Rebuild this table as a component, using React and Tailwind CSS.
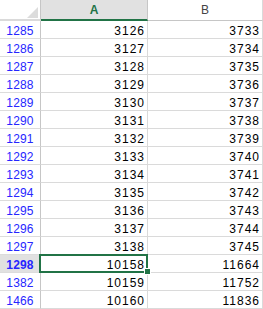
import React from "react";

const rows = [
  [1285, 3126, 3733],
  [1286, 3127, 3734],
  [1287, 3128, 3735],
  [1288, 3129, 3736],
  [1289, 3130, 3737],
  [1290, 3131, 3738],
  [1291, 3132, 3739],
  [1292, 3133, 3740],
  [1293, 3134, 3741],
  [1294, 3135, 3742],
  [1295, 3136, 3743],
  [1296, 3137, 3744],
  [1297, 3138, 3745],
  [1298, 10158, 11664],
  [1382, 10159, 11752],
  [1466, 10160, 11836],
];

export default function App() {
  return (
    <div
      className="relative w-[263px] h-[309px] overflow-hidden bg-white"
      style={{ fontFamily: '"Liberation Sans", Arial, sans-serif' }}
    >
      {/* header */}
      <div className="flex h-[21px]">
        <div className="relative w-[41px] h-[21px] border-r border-r-[#c6c6c6] border-b-2 border-b-[#dadada] bg-white">
          <svg className="absolute left-[27px] top-[7px]" width="11" height="11" viewBox="0 0 11 11">
            <polygon points="11,0 11,11 0,11" fill="#dcdcdc" />
          </svg>
        </div>
        <div className="w-[107px] h-[21px] border-r border-r-[#c6c6c6] border-b-2 border-b-[#217346] bg-[#e1e1e1] text-center text-[12px] leading-[21px] font-bold text-[#217346]">
          A
        </div>
        <div className="w-[115px] h-[21px] border-r border-r-[#dadada] border-b border-b-[#c6c6c6] bg-white text-center text-[12px] leading-[21px] text-[#444444]">
          B
        </div>
      </div>
      {rows.map(([n, a, b]) => {
        const sel = n === 1298;
        return (
          <div key={n} className="flex h-[18px]">
            <div
              className={
                "w-[41px] h-[18px] border-r border-r-[#c6c6c6] border-b border-b-[#dcdcdc] text-center text-[12px] leading-[21px] tracking-[0.15px] text-[#2626ff] " +
                (sel ? "bg-[#e1e1e1] font-bold" : "bg-white")
              }
            >
              {n}
            </div>
            <div className="w-[107px] h-[18px] border-r border-r-[#dadada] border-b border-b-[#dadada] text-right pr-[2px] text-[12px] leading-[21px] tracking-[1px] text-black">
              {a}
            </div>
            <div className="w-[115px] h-[18px] border-r border-r-[#dadada] border-b border-b-[#dadada] text-right pr-[2px] text-[12px] leading-[21px] tracking-[1px] text-black">
              {b}
            </div>
          </div>
        );
      })}
      {/* selection */}
      <div className="absolute left-[39px] top-[254px] w-[109px] h-[19px] border-2 border-[#217346]" />
      <div className="absolute left-[144px] top-[268px] w-[7px] h-[7px] bg-[#217346] border border-white" />
    </div>
  );
}
